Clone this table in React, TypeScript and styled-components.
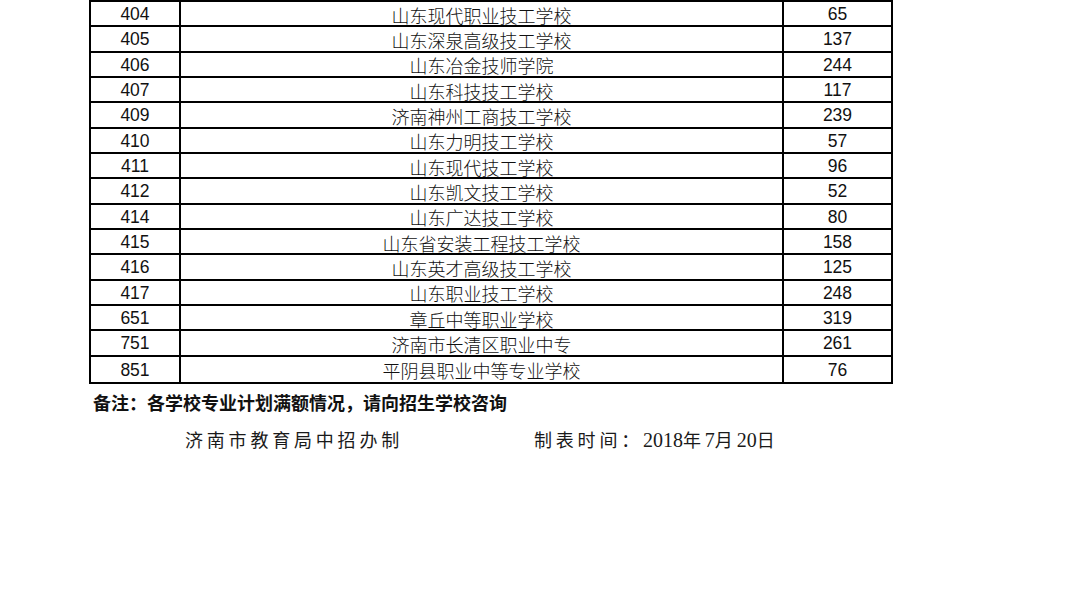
import React from 'react'
import styled, { createGlobalStyle } from 'styled-components';

const GlobalStyle = createGlobalStyle`
    html, body {
        margin: 0;
        padding: 0;
        background: #fff;
    }
`;

const ROWS: [string, string, string][] = [
    ['404', '山东现代职业技工学校', '65'],
    ['405', '山东深泉高级技工学校', '137'],
    ['406', '山东冶金技师学院', '244'],
    ['407', '山东科技技工学校', '117'],
    ['409', '济南神州工商技工学校', '239'],
    ['410', '山东力明技工学校', '57'],
    ['411', '山东现代技工学校', '96'],
    ['412', '山东凯文技工学校', '52'],
    ['414', '山东广达技工学校', '80'],
    ['415', '山东省安装工程技工学校', '158'],
    ['416', '山东英才高级技工学校', '125'],
    ['417', '山东职业技工学校', '248'],
    ['651', '章丘中等职业学校', '319'],
    ['751', '济南市长清区职业中专', '261'],
    ['851', '平阴县职业中等专业学校', '76'],
];

const LINE = '2px solid #000';

const Page = styled.div`
    width: 1080px;
    height: 589px;
    overflow: hidden;
    background: #fff;
    color: #111;
`;

const Table = styled.div`
    margin-left: 89px;
    width: 804px;
    border: ${LINE};
    box-sizing: border-box;
`;

const Row = styled.div<{ last?: boolean }>`
    display: grid;
    grid-template-columns: 90px 603px 1fr;
    height: 25.33px;
    box-sizing: border-box;
    border-bottom: ${p => p.last ? 'none' : LINE};
`;

const Cell = styled.div<{ cjk?: boolean; divider?: boolean }>`
    display: flex;
    align-items: center;
    justify-content: center;
    padding-top: 2px;
    box-sizing: border-box;
    border-right: ${p => p.divider ? LINE : 'none'};
    font-family: ${p => p.cjk ? '"Noto Sans CJK SC", sans-serif' : '"Liberation Sans", Arial, sans-serif'};
    font-size: ${p => p.cjk ? '18px' : '17.5px'};
    font-weight: ${p => p.cjk ? 300 : 400};
    color: #111;
    line-height: 1;
`;

const Note = styled.div`
    margin: 8px 0 0 93px;
    font-family: "Noto Sans CJK SC", sans-serif;
    font-weight: 700;
    font-size: 18px;
    line-height: 20px;
    color: #111;
`;

const Footer = styled.div`
    display: flex;
    margin: 15px 0 0 185px;
    font-family: "Noto Sans CJK SC", "Liberation Serif", serif;
    font-weight: 400;
    font-size: 18px;
    line-height: 24px;
    color: #1a1a1a;
`;

const Spaced = styled.span`
    letter-spacing: 3.8px;
`;

const Digits = styled.span`
    font-family: "Liberation Serif", serif;
    font-size: 20px;
    font-weight: 400;
`;

const Dated = styled.div`
    margin-left: 131px;
`;

export default function App() {
    return (
        <Page>
            <GlobalStyle />
            <Table>
                {ROWS.map((r, i) => (
                    <Row key={r[0]} last={i === ROWS.length - 1}>
                        <Cell divider>{r[0]}</Cell>
                        <Cell cjk divider>{r[1]}</Cell>
                        <Cell>{r[2]}</Cell>
                    </Row>
                ))}
            </Table>
            <Note>备注：各学校专业计划满额情况，请向招生学校咨询</Note>
            <Footer>
                <Spaced>济南市教育局中招办制</Spaced>
                <Dated>
                    <Spaced>制表时间：</Spaced>
                    <Digits>2018</Digits>
                    <Spaced>年</Spaced>
                    <Digits>7</Digits>
                    <Spaced>月</Spaced>
                    <Digits>20</Digits>
                    <span>日</span>
                </Dated>
            </Footer>
        </Page>
    );
}
